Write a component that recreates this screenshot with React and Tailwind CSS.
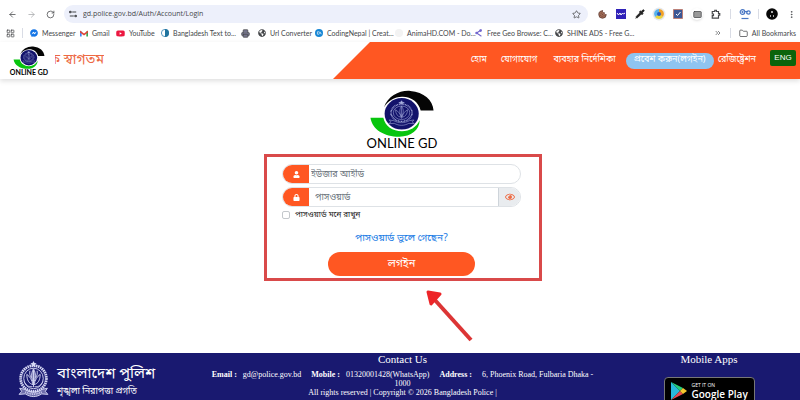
import {
  ArrowLeft, ArrowRight, RotateCw, Star, LayoutGrid, Folder, ChevronsRight, EllipsisVertical,
  Pipette, Printer, Cookie, Keyboard,
} from "lucide-react";
import { FaUser, FaLock, FaRegEye, FaFacebookMessenger, FaYoutube, FaGlobeAmericas } from "react-icons/fa";

const bangla = "font-['Noto_Sans_Bengali','Noto_Sans','Liberation_Sans',sans-serif]";

function Emblem({ className }) {
  return (
    <svg viewBox="0 0 60 72" className={className} fill="none" stroke="currentColor" strokeWidth="1.8" aria-hidden="true">
      <path d="M30 0l2 4 4 .5-3 3 1 4-4-2-4 2 1-4-3-3 4-.5z" fill="currentColor" stroke="none" />
      <ellipse cx="30" cy="34" rx="19" ry="20" />
      <ellipse cx="30" cy="34" rx="25" ry="25" strokeWidth="5.5" strokeDasharray="3 1.2" />
      <path d="M30 15c-5 9-5 18 0 28 5-10 5-19 0-28z" fill="currentColor" fillOpacity=".5" />
      <path d="M30 17v34M29 46c-8-2-12-9-12-20 6 4 10 11 12 20zM31 46c8-2 12-9 12-20-6 4-10 11-12 20zM28 50c-8 1-13-3-16-10M32 50c8 1 13-3 16-10M23 19c-1 6 0 10 3 14M37 19c1 6 0 10-3 14" />
      <path d="M3 53l10 2c10 7 24 7 34 0l10-2-4 6 5 6-12-1c-11 7-21 7-32 0l-12 1 5-6z" fill="currentColor" fillOpacity=".45" />
      <path d="M14 60c10 6 22 6 32 0" strokeWidth="3" strokeDasharray="2 1.5" />
    </svg>
  );
}

function GdMark({ className }) {
  return (
    <svg viewBox="330 12 200 146" className={className} aria-hidden="true">
      <path d="M374 66C386 30 424 12 456 15c42 4 70 28 72 61h-40c-6-27-30-44-58-43-24 1-44 12-56 33z" fill="#050505" />
      <path d="M332 98h40c6 26 28 42 58 42 25 0 44-12 55-34-1 30-27 51-63 51-48 0-84-22-90-59z" fill="#08c50e" />
      <ellipse cx="429" cy="86" rx="53" ry="49" fill="#12126b" />
      <g transform="translate(386 43) scale(1.42 1.17)" fill="none" stroke="#aeb4e2" strokeWidth="1.3">
        <path d="M30 2l2 4 4 1-6 4-6-4 4-1z" fill="#aeb4e2" />
        <circle cx="30" cy="34" r="18" />
        <circle cx="30" cy="34" r="23" strokeWidth="3.5" strokeDasharray="2 1.5" />
        <path d="M30 16c-5 9-5 18 0 28 5-10 5-19 0-28zM30 17v33M29 46c-8-2-12-9-12-20 6 4 10 11 12 20zM31 46c8-2 12-9 12-20-6 4-10 11-12 20z" />
        <path d="M3 53l10 2c10 7 24 7 34 0l10-2-4 5 5 5-12-1c-11 7-21 7-32 0l-12 1 5-5z" />
      </g>
    </svg>
  );
}

function ToolButton({ label, children, className = "" }) {
  return (
    <button type="button" aria-label={label} className={"flex size-4 shrink-0 items-center justify-center " + className}>
      {children}
    </button>
  );
}

function Bookmark({ icon, className = "", children }) {
  return (
    <a href="#" className={"flex shrink-0 items-center gap-1 whitespace-nowrap " + className}>
      {icon}
      {children}
    </a>
  );
}

function BrowserBar() {
  return (
    <div className="shrink-0 bg-white font-['Lato','Open_Sans',sans-serif] text-[#45474a]">
      <div className="flex h-6 items-center pt-1 pr-px pl-1">
        <ToolButton label="Back"><ArrowLeft size={9} /></ToolButton>
        <ToolButton label="Forward" className="ml-[3px] text-[#a5a7aa]"><ArrowRight size={9} /></ToolButton>
        <ToolButton label="Reload" className="ml-[3px]"><RotateCw size={9} /></ToolButton>
        <div className="ml-1.5 flex h-[18px] grow items-center rounded-full bg-[#edf0fb] pr-1 pl-px">
          <ToolButton label="Site settings">
            <svg viewBox="0 0 10 10" className="size-2" fill="none" stroke="currentColor" strokeWidth="1.4"><circle cx="1.700" cy="2.500" r="1" /><path d="M4 2.500h5M1 7.500h5" /><circle cx="8.300" cy="7.500" r="1" /></svg>
          </ToolButton>
          <input aria-label="Address" defaultValue="gd.police.gov.bd/Auth/Account/Login" className="ml-0.5 min-w-0 grow bg-transparent font-['Open_Sans',sans-serif] text-[7px] outline-none" />
          <ToolButton label="Bookmark this page"><Star size={9} /></ToolButton>
        </div>
        <div className="ml-1.5 flex items-center gap-[3px]">
          <ToolButton label="Cookies"><Cookie size={9} fill="#a06a55" className="text-[#5c3931]" /></ToolButton>
          <ToolButton label="Wave">
            <svg viewBox="0 0 10 10" className="size-2.5"><path d="M0 0h10v10H0z" fill="#3022b8" /><path d="M1 4l1.5 2L4 4l1 2 1.5-2 1 1L9 4" fill="none" stroke="#fff" /></svg>
          </ToolButton>
          <ToolButton label="Colour picker"><Pipette size={10} fill="#222" className="text-[#222]" /></ToolButton>
          <ToolButton label="Colour wheel">
            <svg viewBox="0 0 14 14" className="size-3.5"><circle cx="7" cy="7" r="6.5" fill="#e7e9ec" /><path d="M7 7V2a5 5 0 0 1 4 8z" fill="#f3a126" /><path d="M7 7l4 3a5 5 0 0 1-8 0z" fill="#e9d43c" /><path d="M7 7l-4 3a5 5 0 0 1 4-8z" fill="#58b3ed" /><circle cx="7" cy="7" r="2" fill="#265ebd" /></svg>
          </ToolButton>
          <ToolButton label="Checklist">
            <svg viewBox="0 0 10 10" className="size-2.5"><path d="M.5.5h9v9h-9z" fill="#3c5795" stroke="#bb8078" /><path d="M3 5l1.5 1.5L7.5 3" fill="none" stroke="#fff" /></svg>
          </ToolButton>
          <ToolButton label="Keyboard">
            <span className="flex size-3 items-center justify-center rounded-full shadow"><Keyboard size={9} fill="#999" /></span>
          </ToolButton>
          <ToolButton label="Extensions">
            <svg viewBox="0 0 12 12" className="size-2.5" fill="none" stroke="currentColor" strokeWidth="1.400"><path d="M1.500 3h3V1.500h2V3H9v2.500h1.500v2H9V11H1.500V8H3V6H1.500z" /></svg>
          </ToolButton>
          <span className="mx-[3px] h-2.5 w-px bg-[#d9dce5]" />
          <ToolButton label="Passwords" className="text-[#4977c4]">
            <svg viewBox="0 0 12 12" className="size-3" fill="none" stroke="currentColor" strokeWidth="1.200"><circle cx="3.500" cy="4" r="2.300" /><circle cx="3.500" cy="4" r=".5" /><path d="M6 3.500h3M7 5h1" /><circle cx="9.500" cy="4.500" r="1.700" /><path d="M2.500 10.500h7" /></svg>
          </ToolButton>
          <span className="mx-0.5 h-2.5 w-px bg-[#d9dce5]" />
          <ToolButton label="Profile">
            <svg viewBox="0 0 12 12" className="size-3"><circle cx="6" cy="6" r="5.800" fill="#080808" /><path d="M5 3h2v2H5zM4 7h1v2H4zM7 7h1v2H7z" fill="#aaa" /></svg>
          </ToolButton>
          <ToolButton label="Menu"><EllipsisVertical size={9} /></ToolButton>
        </div>
      </div>
      <nav aria-label="Bookmarks" className="flex h-[18px] items-center pr-1 pl-1.5 text-[7px]">
        <LayoutGrid size={9} className="shrink-0" />
        <span className="ml-[7px] h-2.5 w-px shrink-0 bg-[#d9dce5]" />
        <Bookmark className="ml-[7px] w-[50px]" icon={<FaFacebookMessenger size={8} className="shrink-0 text-[#1475e6]" />}>Messenger</Bookmark>
        <Bookmark className="w-9" icon={<svg viewBox="0 0 12 9" className="h-[7px] w-2 shrink-0"><path d="M0 1h2.500v8H0z" fill="#4285f4" /><path d="M9.500 1H12v8H9.500z" fill="#34a853" /><path d="M0 0l6 4.500L12 0v3L6 7.500 0 3z" fill="#de4438" /></svg>}>Gmail</Bookmark>
        <Bookmark className="w-[45px]" icon={<FaYoutube size={9} className="shrink-0 text-[#ec1740]" />}>YouTube</Bookmark>
        <Bookmark className="w-20" icon={<svg viewBox="0 0 10 10" className="size-2 shrink-0"><circle cx="5" cy="5" r="4.500" fill="#fff" stroke="#287bae" /><path d="M5 0a5 5 0 0 1 0 10z" fill="#20749f" /></svg>}>Bangladesh Text to...</Bookmark>
        <Bookmark className="w-[17px]" icon={<Printer size={9} fill="#75758d" className="shrink-0" />} />
        <Bookmark className="w-[57px]" icon={<FaGlobeAmericas size={8} className="shrink-0" />}>Url Converter</Bookmark>
        <Bookmark className="w-20" icon={<svg viewBox="0 0 10 10" className="size-2 shrink-0"><circle cx="5" cy="5" r="5" fill="#1686d5" /><path d="M5 3.500H3v3h2M6 6.500v-3l2 3" fill="none" stroke="#fff" strokeWidth=".8" /></svg>}>CodingNepal | Creat...</Bookmark>
        <Bookmark className="w-20" icon={<span className="size-2 shrink-0 rounded-full bg-[#f3f3f3]" />}>AnimaHD.COM - Do...</Bookmark>
        <Bookmark className="w-20" icon={<svg viewBox="0 0 10 10" className="size-2 shrink-0" fill="none" stroke="#7065cd" strokeWidth="1.300"><path d="M8 1L2 5l6 4" /><circle cx="2" cy="5" r="1" /><circle cx="7" cy="2" r="1" /></svg>}>Free Geo Browse: C...</Bookmark>
        <Bookmark icon={<FaGlobeAmericas size={8} className="shrink-0" />}>SHINE ADS - Free G...</Bookmark>
        <div className="ml-auto flex items-center gap-2">
          <ChevronsRight size={8} />
          <span className="h-2.5 w-px bg-[#d9dce5]" />
          <Bookmark icon={<Folder size={9} />}>All Bookmarks</Bookmark>
        </div>
      </nav>
    </div>
  );
}

function SiteHeader() {
  return (
    <header className={"z-10 flex h-[37px] shrink-0 justify-between bg-white shadow-[0_2px_5px_#0002] " + bangla}>
      <div className="flex items-center pl-2.5">
        <a href="#" className="flex w-[38px] flex-col items-center font-['Lato','Open_Sans',sans-serif]">
          <GdMark className="h-[23px] w-[34px]" />
          <span className="text-[7px] leading-[7px] font-bold whitespace-nowrap text-black">ONLINE GD</span>
        </a>
        <div className="ml-[7px] flex w-[49px] justify-end overflow-hidden text-sm whitespace-nowrap text-[#ed6843]">
          <span>ক স্বাগতম</span>
        </div>
      </div>
      <nav className="flex w-[467px] items-center justify-end bg-[#ff5722] pr-1 text-[9px] whitespace-nowrap text-white [clip-path:polygon(37px_0,100%_0,100%_100%,0_100%)]">
        <a href="#" className="mr-3.5">হোম</a>
        <a href="#" className="mr-4">যোগাযোগ</a>
        <a href="#" className="mr-2.5">ব্যবহার নির্দেশিকা</a>
        <a href="#" className="mr-1 flex h-4 w-[88px] items-center justify-center rounded-full bg-[#8fc4f0]">প্রবেশ করুন(লগইন)</a>
        <a href="#" className="mr-3.5">রেজিষ্ট্রেশন</a>
        <button type="button" className="mb-[5px] h-4 w-[26px] rounded-xs bg-[#0b640b] font-['Liberation_Sans',sans-serif] text-[8px]">ENG</button>
      </nav>
    </header>
  );
}

function LoginForm() {
  return (
    <form className={"w-[278px] border-3 border-[#d94a4a] pt-[7px] pr-[18px] pb-0.5 pl-[15px] " + bangla}>
      <div className="flex h-5 overflow-hidden rounded-full border border-[#dee2e6]">
        <label htmlFor="user" aria-label="ইউজার আইডি" className="flex w-[26px] items-center justify-center bg-[#ff5722] text-white"><FaUser size={7} /></label>
        <input id="user" placeholder="ইউজার আইডি" className="min-w-0 grow px-0.5 pt-[3px] text-[9px] outline-none placeholder:text-[#6c757d]" />
      </div>
      <div className="mt-[3px] flex h-5 overflow-hidden rounded-full border border-[#dee2e6]">
        <label htmlFor="password" aria-label="পাসওয়ার্ড" className="flex w-[26px] items-center justify-center bg-[#ff5722] text-white"><FaLock size={7} /></label>
        <input id="password" type="password" placeholder="পাসওয়ার্ড" className="min-w-0 grow px-1.5 pt-[3px] text-[9px] outline-none placeholder:text-[#6c757d]" />
        <button type="button" aria-label="পাসওয়ার্ড দেখুন" className="flex w-[22px] items-center justify-center border-l border-[#ced4da] bg-[#e9ecef] text-[#ee6941]"><FaRegEye size={10} /></button>
      </div>
      <label className="flex h-4 items-center gap-[5px] text-[8px] text-[#222]">
        <input type="checkbox" className="size-2 appearance-none rounded-xs border border-[#c4c8cc] bg-white" />
        পাসওয়ার্ড মনে রাখুন
      </label>
      <a href="#" className="mt-2 block text-center text-[10px] leading-4 text-[#197be5]">পাসওয়ার্ড ভুলে গেছেন?</a>
      <button type="submit" className="mx-auto mt-[5px] block h-6 w-[147px] rounded-full bg-[#ff5722] text-[11px] text-white">লগইন</button>
    </form>
  );
}

function SiteFooter() {
  return (
    <footer className="grid h-[47px] shrink-0 grid-cols-[187px_1fr_182px] overflow-hidden bg-[#191970] font-['Liberation_Serif',serif] text-white">
      <div className="flex items-start gap-2 pt-2 pl-[18px]">
        <Emblem className="h-[37px] w-[31px] shrink-0 text-[#d6d8f4]" />
        <div className={"pt-0.5 whitespace-nowrap " + bangla}>
          <p className="text-[15px] leading-[22px]">বাংলাদেশ পুলিশ</p>
          <p className="text-[9px] leading-[14px]">শৃঙ্খলা নিরাপত্তা প্রগতি</p>
        </div>
      </div>
      <div className="flex flex-col items-center text-center text-[8px] leading-[9px]">
        <h2 className="mb-1 text-[11px] leading-[13px]">Contact Us</h2>
        <p className="max-w-[394px]">
          <b className="mr-1">Email :</b> gd@police.gov.bd <b className="mr-1 ml-2">Mobile :</b> 01320001428(WhatsApp) <b className="mr-2 ml-2">Address :</b> 6, Phoenix Road, Fulbaria Dhaka - 1000
        </p>
        <p>All rights reserved | Copyright © 2026 Bangladesh Police |</p>
      </div>
      <div className="flex flex-col items-center">
        <h2 className="text-[11px] leading-[13px]">Mobile Apps</h2>
        <a href="#" className="mt-[11px] flex h-7 w-[91px] shrink-0 items-center gap-[5px] rounded-sm border border-[#777] bg-black pl-1.5 font-['Open_Sans',sans-serif]">
          <svg viewBox="0 0 16 18" className="h-[18px] w-4"><path d="M0 0v18l9-9z" fill="#28b9dc" /><path d="M0 0l12 6-3 3z" fill="#25cc79" /><path d="M0 18l12-6-3-3z" fill="#e84a50" /><path d="M12 6l4 3-4 3-3-3z" fill="#f6c72e" /></svg>
          <span className="flex flex-col whitespace-nowrap">
            <span className="text-[5px] leading-[6px]">GET IT ON</span>
            <span className="text-[10px] leading-[13px] font-semibold">Google Play</span>
          </span>
        </a>
      </div>
    </footer>
  );
}

export default function App() {
  return (
    <div className="flex h-screen flex-col overflow-hidden bg-white">
      <BrowserBar />
      <SiteHeader />
      <main className="flex grow flex-col items-center pt-[11px] pl-1.5">
        <div className="mr-0.5 mb-[5px] flex flex-col items-center font-['Lato','Open_Sans',sans-serif]">
          <GdMark className="h-[47px] w-[66px]" />
          <span className="text-[13px] leading-3 text-black">ONLINE GD</span>
        </div>
        <LoginForm />
        <svg viewBox="0 0 48 52" className="mt-[9px] ml-[94px] h-[52px] w-12" aria-hidden="true">
          <path d="M8 9l37 41" stroke="#dc3535" strokeWidth="4" />
          <path d="M2 2l12 2-9 10z" fill="#ed2528" stroke="#ed2528" strokeWidth="3" strokeLinejoin="round" />
        </svg>
      </main>
      <SiteFooter />
    </div>
  );
}
